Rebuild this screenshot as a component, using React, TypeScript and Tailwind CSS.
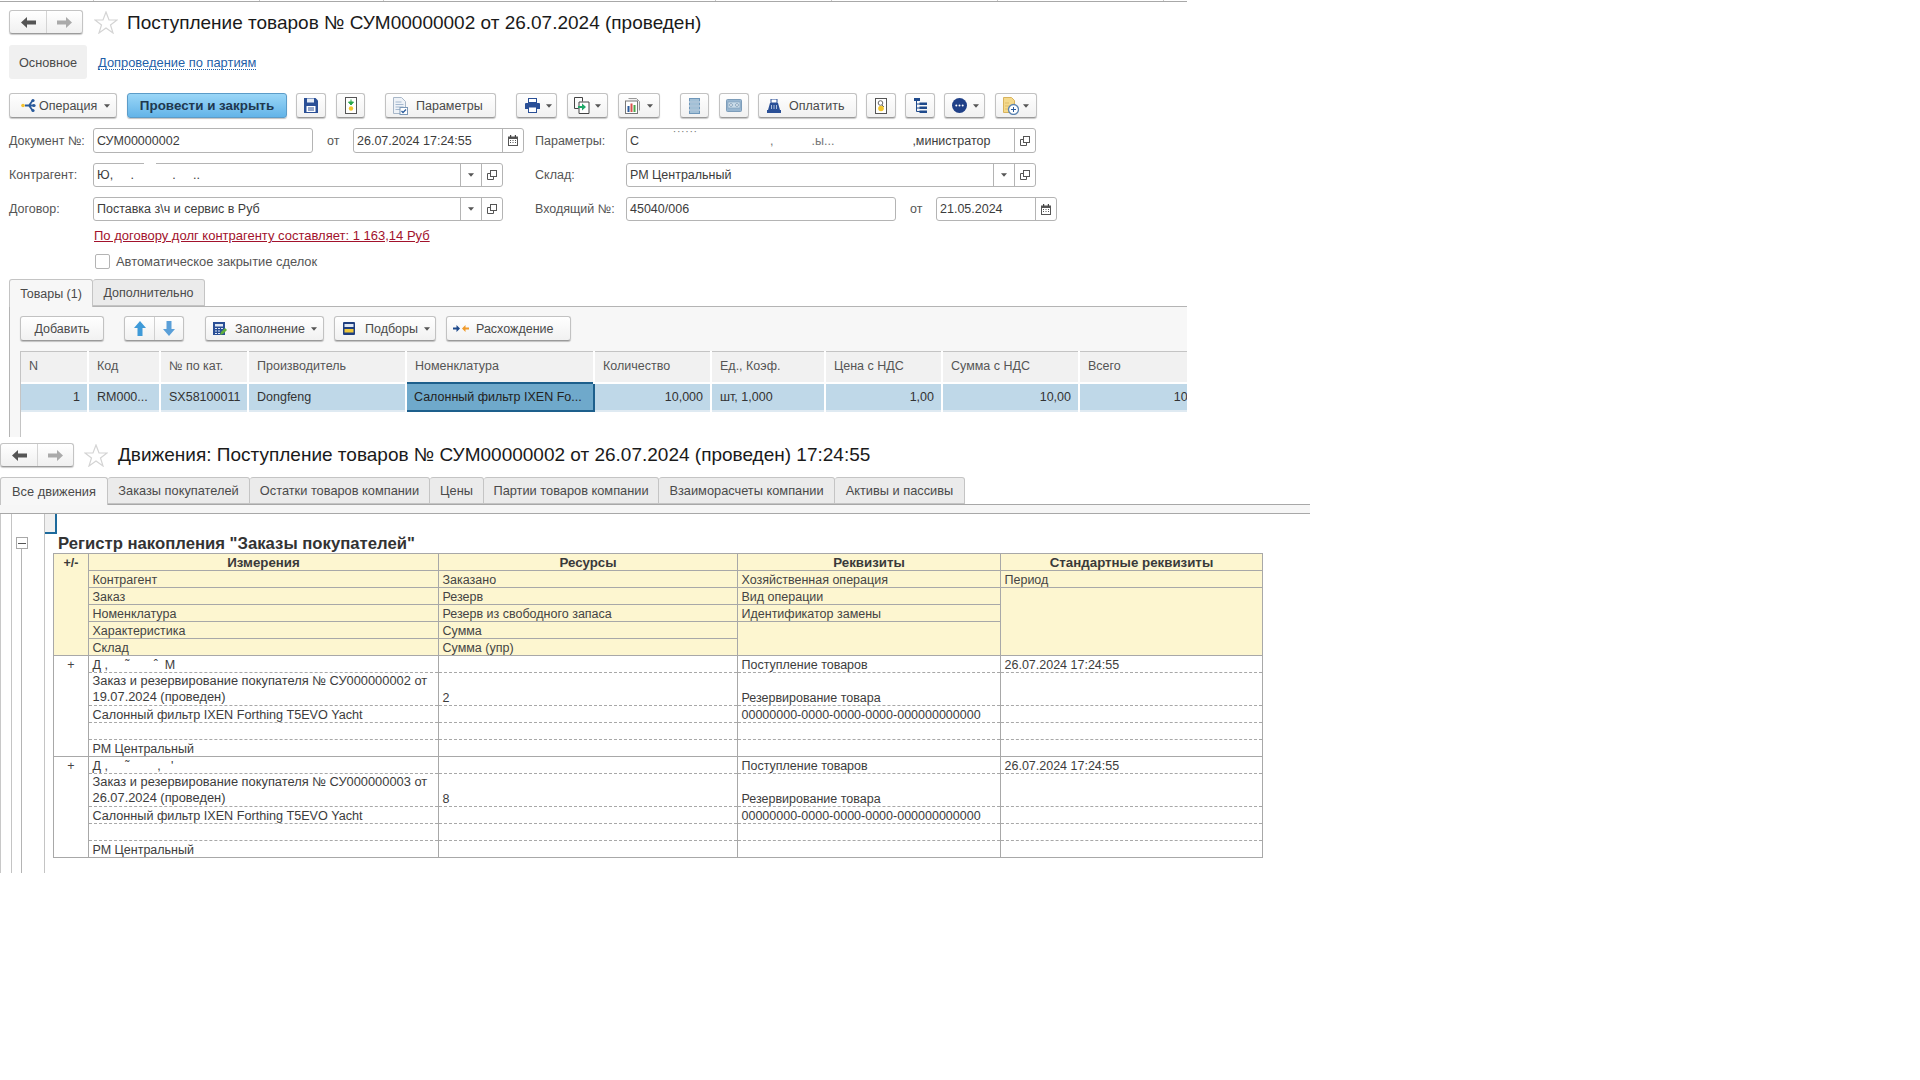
import React from 'react';

const Caret = ({ className = '' }: { className?: string }) => (
  <svg width="6" height="4" viewBox="0 0 7 4" className={className}>
    <path d="M0 0h7L3.5 4z" fill="#555" />
  </svg>
);

const Star = ({ className = '' }: { className?: string }) => (
  <svg width="24" height="23" viewBox="0 0 24 23" className={className}>
    <path d="M12 1l3 8h8l-6.500 5 2.500 8-7-5-7 5 2.500-8L1 9h8z" fill="#fff" stroke="#d4d4d4" strokeWidth="1.200" />
  </svg>
);

const NavButtons = ({ className = '' }: { className?: string }) => (
  <div className={`flex h-[24px] w-[74px] rounded-[3px] border border-[#c4c4c4] border-b-[#9c9c9c] bg-linear-to-b from-white to-[#f0f0f0] shadow-[0_1px_1px_rgba(0,0,0,0.2)] ${className}`}>
    <div className="flex w-[37px] items-center justify-center border-r border-[#d4d4d4]">
      <svg width="15" height="11" viewBox="0 0 15 11"><path d="M0 5.500L6 0v3.500h9v4H6V11z" fill="#555" /></svg>
    </div>
    <div className="flex flex-1 items-center justify-center">
      <svg width="15" height="11" viewBox="0 0 15 11"><path d="M15 5.500L9 0v3.500H0v4h9V11z" fill="#aaa" /></svg>
    </div>
  </div>
);

const btn = 'flex h-[25px] shrink-0 items-center rounded-[3px] border border-[#c2c2c2] border-b-[#9a9a9a] bg-linear-to-b from-white to-[#f1f1f1] text-[#4a4a4a] shadow-[0_1px_1px_rgba(0,0,0,0.22)]';

const OperationIcon = () => (
  <svg width="15" height="15" viewBox="0 0 15 15">
    <circle cx="2" cy="7.500" r="1.800" fill="#f2c230" />
    <path d="M4 7.500h4M8 7.500L12 2M8 7.500h5M8 7.500L12 13" stroke="#2a5b9c" strokeWidth="1.800" fill="none" />
    <circle cx="12" cy="2.500" r="1.600" fill="#2a5b9c" />
    <circle cx="13" cy="7.500" r="1.600" fill="#2a5b9c" />
    <circle cx="12" cy="12.500" r="1.600" fill="#2a5b9c" />
  </svg>
);
const SaveIcon = () => (
  <svg width="14" height="15" viewBox="0 0 14 15">
    <path d="M0 0h11.500L14 2.500V15H0z" fill="#2a4f96" />
    <rect x="3" y="0.500" width="7" height="4" fill="#e4ebf5" />
    <rect x="2.500" y="8" width="9" height="6" fill="#fff" />
    <path d="M4 10h6M4 12h6" stroke="#2a4f96" />
  </svg>
);
const MoveIcon = () => (
  <svg width="12" height="17" viewBox="0 0 12 17">
    <rect x="0.500" y="0.500" width="11" height="16" fill="#fff" stroke="#555" />
    <path d="M6 2.500v3M3.500 5h5L6 8z" fill="#2aa84a" stroke="#2aa84a" />
    <circle cx="6" cy="11.500" r="2.200" fill="#f3c62c" />
  </svg>
);
const ParamsIcon = () => (
  <svg width="15" height="18" viewBox="0 0 15 18">
    <path d="M0.500 0.500h8l4 4v12H0.500z" fill="#eef2f7" stroke="#a8b7c8" />
    <path d="M2.500 5h6M2.500 7.500h8M2.500 10h8M2.500 12.500h5" stroke="#a4b8cf" />
    <rect x="7" y="10.500" width="7.500" height="7" fill="#fff" stroke="#7d99b8" />
    <path d="M8.500 14l1.500 1.500 3-3" stroke="#2a5b9c" strokeWidth="1.300" fill="none" />
  </svg>
);
const PrintIcon = () => (
  <svg width="15" height="15" viewBox="0 0 15 15">
    <rect x="3.500" y="0.500" width="8" height="4" fill="#fff" stroke="#2a4f96" />
    <path d="M1 5h13a1 1 0 0 1 1 1v5H0V6a1 1 0 0 1 1-1z" fill="#2a4f96" />
    <rect x="3.500" y="9" width="8" height="5.500" fill="#fff" stroke="#2a4f96" />
  </svg>
);
const CopyIcon = () => (
  <svg width="16" height="17" viewBox="0 0 16 17">
    <path d="M0.500 0.500h8v4M0.500 0.500v11h4" stroke="#444" fill="none" />
    <path d="M5 5h10v11.500H5z" fill="#fff" stroke="#444" />
    <path d="M4 9h4V6.500l4 3.500-4 3.500V11H4z" fill="#1fa868" />
  </svg>
);
const ReportIcon = () => (
  <svg width="17" height="16" viewBox="0 0 17 16">
    <path d="M3.500 0.500h8l3 3v9" stroke="#999" fill="#f2f2f2" />
    <rect x="0.500" y="3" width="12" height="12.500" fill="#fff" stroke="#777" />
    <rect x="2.500" y="8" width="2" height="6" fill="#2a5b9c" />
    <rect x="5.500" y="5.500" width="2" height="8.500" fill="#d9534f" />
    <rect x="8.500" y="7" width="2" height="7" fill="#4aa84a" />
  </svg>
);
const ListIcon = () => (
  <svg width="11" height="16" viewBox="0 0 11 16">
    <rect width="11" height="16" fill="#6f97ba" />
    <path d="M0 4h11M0 8h11M0 12h11" stroke="#e8f0f6" />
    <rect x="1" y="1" width="9" height="2" fill="#a3c0d6" />
    <rect x="1" y="5" width="9" height="2" fill="#a3c0d6" />
    <rect x="1" y="9" width="9" height="2" fill="#a3c0d6" />
    <rect x="1" y="13" width="9" height="2" fill="#a3c0d6" />
  </svg>
);
const CassetteIcon = () => (
  <svg width="16" height="13" viewBox="0 0 16 13">
    <rect x="0.500" y="0.500" width="15" height="12" rx="1" fill="#98b6d0" stroke="#7d9dba" />
    <rect x="2" y="3" width="12" height="6" fill="#c9dbe9" stroke="#7d9dba" strokeWidth="0.600" />
    <circle cx="5" cy="6" r="1.400" fill="#fff" stroke="#5f83a3" strokeWidth="0.700" />
    <circle cx="11" cy="6" r="1.400" fill="#fff" stroke="#5f83a3" strokeWidth="0.700" />
  </svg>
);
const PayIcon = () => (
  <svg width="14" height="14" viewBox="0 0 14 14">
    <rect x="4" y="0" width="6" height="4" fill="#fff" stroke="#2a4f96" />
    <path d="M3 4h8l2 7H1z" fill="#2a4f96" />
    <path d="M4.500 6v4M7 6v4M9.500 6v4" stroke="#cfdcec" strokeWidth="0.800" />
    <rect x="0" y="11" width="14" height="3" fill="#2a4f96" />
  </svg>
);
const PersonIcon = () => (
  <svg width="12" height="16" viewBox="0 0 12 16">
    <rect x="0.500" y="0.500" width="11" height="15" fill="#fff" stroke="#555" />
    <circle cx="5.500" cy="5" r="2.300" fill="#fff" stroke="#666" />
    <path d="M7 7l2 2" stroke="#666" />
    <circle cx="6" cy="10.500" r="2.800" fill="#f3c62c" />
  </svg>
);
const TreeIcon = () => (
  <svg width="13" height="15" viewBox="0 0 13 15">
    <rect x="0" y="0" width="6" height="3" fill="#1f4a8c" />
    <path d="M2.500 3v10.500H6M2.500 6H6M2.500 10H6" stroke="#1f4a8c" fill="none" />
    <rect x="5.500" y="4.500" width="7.500" height="2.500" fill="#1f4a8c" />
    <rect x="5.500" y="8.500" width="7.500" height="2.500" fill="#1f4a8c" />
    <rect x="5.500" y="12.500" width="7.500" height="2.500" fill="#1f4a8c" />
  </svg>
);
const DotsIcon = () => (
  <svg width="15" height="15" viewBox="0 0 15 15">
    <circle cx="7.500" cy="7.500" r="7.500" fill="#1f4088" />
    <circle cx="4.300" cy="7.500" r="1" fill="#fff" />
    <circle cx="7.500" cy="7.500" r="1" fill="#fff" />
    <circle cx="10.700" cy="7.500" r="1" fill="#fff" />
  </svg>
);
const DocClockIcon = () => (
  <svg width="16" height="18" viewBox="0 0 16 18">
    <path d="M0.500 0.500h8l3 3v12H0.500z" fill="#f4d98c" stroke="#d8b35c" />
    <path d="M2.500 6h3M2.500 9h3M2.500 12h3" stroke="#c9a24a" strokeDasharray="1 1" />
    <circle cx="10.500" cy="12.500" r="5" fill="#fff" stroke="#5b83b0" strokeWidth="1.300" />
    <path d="M10.500 10v5M8 12.500h5" stroke="#2a5b9c" />
  </svg>
);
const ArrowUp = () => (
  <svg width="12" height="15" viewBox="0 0 12 15"><path d="M6 0l6 7H8.500v8h-5V7H0z" fill="#3f9ad8" /></svg>
);
const ArrowDown = () => (
  <svg width="12" height="15" viewBox="0 0 12 15"><path d="M6 15L0 8h3.500V0h5v8H12z" fill="#5a9fd8" /></svg>
);
const FillIcon = () => (
  <svg width="14" height="14" viewBox="0 0 14 14">
    <rect width="12" height="13" fill="#2a4f96" />
    <rect x="2" y="2" width="8" height="2.500" fill="#dfe8f3" />
    <path d="M2 6.500h2M5 6.500h2M8 6.500h2M2 9h2M5 9h2M2 11.500h2M5 11.500h2" stroke="#dfe8f3" />
    <path d="M7 13l1-3 4-4 2 2-4 4z" fill="#5fae3c" />
  </svg>
);
const PickIcon = () => (
  <svg width="12" height="13" viewBox="0 0 12 13">
    <rect width="12" height="13" rx="1" fill="#1f3f80" />
    <rect x="1.500" y="2" width="9" height="3" fill="#dfe8f3" />
    <rect x="1.500" y="7" width="9" height="3.500" fill="#f0c93c" />
  </svg>
);
const DiffIcon = () => (
  <svg width="16" height="7" viewBox="0 0 16 7">
    <path d="M0 2.500h3.500V0L7 3.500 3.500 7V4.500H0z" fill="#1f4a8c" />
    <path d="M16 2.500h-3.500V0L9 3.500 12.500 7V4.500H16z" fill="#f09a2a" />
  </svg>
);
const CalendarIcon = () => (
  <svg width="10" height="11" viewBox="0 0 10 11">
    <path d="M0 1.500h10V11H0z" fill="#555" />
    <rect x="2" y="0" width="1.200" height="2.500" fill="#444" />
    <rect x="6.800" y="0" width="1.200" height="2.500" fill="#444" />
    <rect x="1" y="4" width="8" height="6" fill="#fff" />
    <path d="M2 5.500h1M4.500 5.500h1M7 5.500h1M2 7.500h1M4.500 7.500h1M7 7.500h1" stroke="#555" />
  </svg>
);
const OpenIcon = () => (
  <svg width="10" height="10" viewBox="0 0 10 10">
    <rect x="3.500" y="0.500" width="6" height="6" fill="#fff" stroke="#555" />
    <path d="M3 3.500H0.500v6h6V7" stroke="#555" fill="none" />
  </svg>
);

type Side = 'caret' | 'open' | 'calendar';

const Field = ({ className, text, sides = [], textClass = '', children }: {
  className: string; text?: string; sides?: Side[]; textClass?: string; children?: React.ReactNode;
}) => (
  <div className={`relative flex h-full shrink-0 rounded-[3px] border border-[#b4b4b4] bg-white ${className}`}>
    <div className={`flex min-w-0 flex-1 items-center whitespace-pre pl-[3px] text-[#3c3c3c] ${textClass}`}>{text}{children}</div>
    {sides.map((s, i) => (
      <div key={i} className="flex w-[21px] shrink-0 items-center justify-center border-l border-[#b4b4b4]">
        {s === 'caret' && <Caret />}
        {s === 'open' && <OpenIcon />}
        {s === 'calendar' && <CalendarIcon />}
      </div>
    ))}
  </div>
);

const Label = ({ className, children }: { className: string; children: React.ReactNode }) => (
  <div className={`flex shrink-0 items-center text-[#555] ${className}`}>{children}</div>
);

const goodsCols = [
  { title: 'N', w: 'w-[67px]' },
  { title: 'Код', w: 'w-[72px]' },
  { title: '№ по кат.', w: 'w-[88px]' },
  { title: 'Производитель', w: 'w-[158px]' },
  { title: 'Номенклатура', w: 'w-[188px]' },
  { title: 'Количество', w: 'w-[117px]' },
  { title: 'Ед., Коэф.', w: 'w-[114px]' },
  { title: 'Цена с НДС', w: 'w-[117px]' },
  { title: 'Сумма с НДС', w: 'w-[137px]' },
  { title: 'Всего', w: 'w-[134px]' },
];

const moveTabs = [
  { title: 'Заказы покупателей', w: 'w-[142px]' },
  { title: 'Остатки товаров компании', w: 'w-[180px]' },
  { title: 'Цены', w: 'w-[54px]' },
  { title: 'Партии товаров компании', w: 'w-[175px]' },
  { title: 'Взаиморасчеты компании', w: 'w-[176px]' },
  { title: 'Активы и пассивы', w: 'w-[130px]' },
];

const rulerTicks = ['w-[94px]', 'w-[166px]', 'w-[124px]', 'w-[332px]', 'w-[116px]', 'w-[166px]', 'w-[166px]'];

const hCell = 'border border-[#a8a8a8] bg-[#fdf6d0] pl-[3.500px] pr-[2px] pt-[2px] pb-0 text-left font-normal leading-[14px] text-[#444] h-[17px]';
const hTitle = 'border border-[#a8a8a8] bg-[#fdf6d0] pt-[2px] pb-0 text-center text-[13.300px] font-bold leading-[14px] text-[#3a3a3a] h-[17px]';
const dCell = 'border-x border-y border-[#a8a8a8] [border-bottom-style:dashed] [border-top-style:dashed] pl-[3.500px] pr-[2px] pt-[2px] pb-0 align-bottom leading-[14px] text-[#3c3c3c] h-[17px]';
const lCell = 'border-x border-t border-b border-[#a8a8a8] [border-top-style:dashed] pl-[3.500px] pr-[2px] pt-[2px] pb-0 align-bottom leading-[14px] text-[#3c3c3c] h-[17px]';
const oCell = 'border-x border-y border-[#a8a8a8] [border-bottom-style:dashed] [border-top-style:dashed] pl-[3.500px] pr-[2px] py-0 align-bottom text-[12.850px] leading-[16px] text-[#3c3c3c] h-[33px]';

const MoveGroup = ({ name, order, qty }: { name: React.ReactNode; order: string; qty: string }) => (
  <>
    <tr>
      <td rowSpan={5} className="border border-[#a8a8a8] pt-px text-center align-top text-[#444]">+</td>
      <td className={`${dCell} [border-top-style:solid]`}>{name}</td>
      <td className={`${dCell} [border-top-style:solid]`}></td>
      <td className={`${dCell} [border-top-style:solid]`}>Поступление товаров</td>
      <td className={`${dCell} [border-top-style:solid]`}>26.07.2024 17:24:55</td>
    </tr>
    <tr>
      <td className={oCell}>{order}</td>
      <td className={dCell}>{qty}</td>
      <td className={dCell}>Резервирование товара</td>
      <td className={dCell}></td>
    </tr>
    <tr>
      <td className={`${dCell} text-[12.650px]`}>Салонный фильтр IXEN Forthing T5EVO Yacht</td>
      <td className={dCell}></td>
      <td className={dCell}>00000000-0000-0000-0000-000000000000</td>
      <td className={dCell}></td>
    </tr>
    <tr>
      <td className={dCell}></td>
      <td className={dCell}></td>
      <td className={dCell}></td>
      <td className={dCell}></td>
    </tr>
    <tr>
      <td className={lCell}>РМ Центральный</td>
      <td className={lCell}></td>
      <td className={lCell}></td>
      <td className={lCell}></td>
    </tr>
  </>
);

export default function App() {
  return (
    <div className="h-[1080px] w-[1920px] overflow-hidden bg-white font-['Liberation_Sans',Arial,sans-serif] text-[12.500px] leading-[16px]">
      {/* окно документа */}
      <div className="h-[437px] w-[1187px] overflow-hidden">
        <div className="flex h-[2px] border-b border-[#a8a8a8]">
          {rulerTicks.map((w, i) => <div key={i} className={`${w} border-r border-[#c8c8c8]`} />)}
        </div>

        <div className="ml-[9px] mt-[8px] flex h-[24px] items-center">
          <NavButtons />
          <Star className="ml-[11px]" />
          <div className="ml-[9px] pt-px text-[19px] leading-[24px] text-[#1a1a1a]">Поступление товаров № СУМ00000002 от 26.07.2024 (проведен)</div>
        </div>

        <div className="ml-[9px] mt-[11px] flex h-[34px] items-center">
          <div className="flex h-full w-[78px] items-center justify-center rounded-[3px] bg-[#f0f0f0] pt-px text-[12.700px] text-[#4a4a4a]">Основное</div>
          <div className="ml-[11px] mt-[2px] border-b border-dotted border-[#1f5fa8] text-[12.900px] leading-[13px] text-[#1f5fa8]">Допроведение по партиям</div>
        </div>

        <div className="ml-[9px] mt-[14px] flex h-[25px]">
          <div className={`${btn} w-[108px] pl-[11px]`}><OperationIcon /><span className="ml-[3px]">Операция</span><Caret className="ml-[7px]" /></div>
          <div className="ml-[10px] flex h-[25px] w-[160px] items-center justify-center rounded-[3px] border border-[#5c9cc8] bg-linear-to-b from-[#9ad6f7] to-[#62b4e8] text-[13.400px] font-bold text-[#20384f] shadow-[0_1px_1px_rgba(0,0,0,0.25)]">Провести и закрыть</div>
          <div className={`${btn} ml-[9px] w-[30px] justify-center`}><SaveIcon /></div>
          <div className={`${btn} ml-[10px] w-[29px] justify-center`}><MoveIcon /></div>
          <div className={`${btn} ml-[20px] w-[111px] pl-[7px]`}><ParamsIcon /><span className="ml-[8px]">Параметры</span></div>
          <div className={`${btn} ml-[20px] w-[41px] pl-[8px]`}><PrintIcon /><Caret className="ml-[6px]" /></div>
          <div className={`${btn} ml-[10px] w-[41px] pl-[6px]`}><CopyIcon /><Caret className="ml-[5px]" /></div>
          <div className={`${btn} ml-[10px] w-[42px] pl-[6px]`}><ReportIcon /><Caret className="ml-[5px]" /></div>
          <div className={`${btn} ml-[20px] w-[29px] justify-center`}><ListIcon /></div>
          <div className={`${btn} ml-[10px] w-[30px] justify-center`}><CassetteIcon /></div>
          <div className={`${btn} ml-[9px] w-[99px] pl-[8px]`}><PayIcon /><span className="ml-[8px]">Оплатить</span></div>
          <div className={`${btn} ml-[9px] w-[30px] justify-center`}><PersonIcon /></div>
          <div className={`${btn} ml-[9px] w-[30px] justify-center`}><TreeIcon /></div>
          <div className={`${btn} ml-[9px] w-[41px] pl-[7px]`}><DotsIcon /><Caret className="ml-[6px]" /></div>
          <div className={`${btn} ml-[10px] w-[42px] pl-[7px]`}><DocClockIcon /><Caret className="ml-[4px]" /></div>
        </div>

        <div className="ml-[9px] mt-[10px] flex h-[25px]">
          <Label className="w-[84px]">Документ №:</Label>
          <Field className="w-[220px]" text="СУМ00000002" />
          <Label className="ml-[14px] w-[26px]">от</Label>
          <Field className="w-[171px]" text="26.07.2024 17:24:55" sides={['calendar']} />
          <Label className="ml-[11px] w-[91px]">Параметры:</Label>
          <Field className="w-[410px]" sides={['open']}>
            <span>С</span>
            <span className="ml-[34px] -translate-y-[5px] text-[#777]">˙˙˙˙˙˙</span>
            <span className="ml-[72px] text-[#777]">,</span>
            <span className="ml-[38px] text-[#777]">.ы...</span>
            <span className="ml-[78px]">,министратор</span>
          </Field>
        </div>
        <div className="ml-[9px] mt-[10px] flex h-[24px]">
          <Label className="w-[84px]">Контрагент:</Label>
          <Field className="w-[410px]" text="Ю,     .           .     .." sides={['caret', 'open']}>
            <div className="absolute -top-px left-[50px] h-[3px] w-[12px] bg-white" />
          </Field>
          <Label className="ml-[32px] w-[91px]">Склад:</Label>
          <Field className="w-[410px]" text="РМ Центральный" sides={['caret', 'open']} />
        </div>
        <div className="ml-[9px] mt-[10px] flex h-[24px]">
          <Label className="w-[84px]">Договор:</Label>
          <Field className="w-[410px]" text="Поставка з\ч и сервис в Руб" sides={['caret', 'open']} />
          <Label className="ml-[32px] w-[91px]">Входящий №:</Label>
          <Field className="w-[270px]" text="45040/006" />
          <Label className="ml-[14px] w-[26px]">от</Label>
          <Field className="w-[121px]" text="21.05.2024" sides={['calendar']} />
        </div>

        <div className="ml-[94px] mt-[7px] h-[16px] text-[13px] underline text-[#a2122c]">По договору долг контрагенту составляет: 1 163,14 Руб</div>

        <div className="ml-[95px] mt-[10px] flex h-[15px] items-center">
          <div className="h-[15px] w-[15px] rounded-[2px] border border-[#b4b4b4] bg-white" />
          <span className="ml-[6px] text-[12.900px] text-[#555]">Автоматическое закрытие сделок</span>
        </div>

        <div className="ml-[9px] mt-[10px] flex h-[27px]">
          <div className="z-10 -mb-px flex w-[84px] items-center justify-center rounded-t-[3px] border border-b-0 border-[#c4c4c4] bg-[#f7f7f7] text-[#4a4a4a]">Товары (1)</div>
          <div className="flex w-[112px] items-center justify-center rounded-t-[3px] border border-l-0 border-[#c4c4c4] bg-[#ebebeb] text-[#4a4a4a]">Дополнительно</div>
        </div>

        <div className="ml-[9px] h-[131px] overflow-hidden border-l border-t border-[#b4b4b4] bg-[#f7f7f7] pl-[10px]">
          <div className="mt-[9px] flex h-[25px]">
            <div className={`${btn} w-[84px] justify-center`}>Добавить</div>
            <div className={`${btn} ml-[20px] w-[60px]`}>
              <div className="flex h-full w-[30px] items-center justify-center border-r border-[#d0d0d0]"><ArrowUp /></div>
              <div className="flex h-full flex-1 items-center justify-center"><ArrowDown /></div>
            </div>
            <div className={`${btn} ml-[21px] w-[119px] pl-[7px]`}><FillIcon /><span className="ml-[8px]">Заполнение</span><Caret className="ml-[6px]" /></div>
            <div className={`${btn} ml-[10px] w-[102px] pl-[8px]`}><PickIcon /><span className="ml-[10px]">Подборы</span><Caret className="ml-[6px]" /></div>
            <div className={`${btn} ml-[10px] w-[125px] pl-[6px]`}><DiffIcon /><span className="ml-[7px]">Расхождение</span></div>
          </div>
          <div className="mt-[10px] h-[88px] w-[1300px] border-l border-[#c4c4c4] bg-white">
            <table className="table-fixed border-collapse">
              <thead>
                <tr className="border-t border-[#c4c4c4]">
                  {goodsCols.map((c) => (
                    <th key={c.title} className={`${c.w} h-[31px] border-r-2 border-white bg-[#f1f1f1] pb-[2px] pl-[8px] text-left font-normal text-[#555]`}>{c.title}</th>
                  ))}
                </tr>
              </thead>
              <tbody>
                <tr className="border-t-2 border-b-2 border-t-white border-b-[#dfeaf2]">
                  <td className="h-[28px] border-r-2 border-white bg-[#bfd8e8] pr-[7px] text-right text-[#333]">1</td>
                  <td className="border-r-2 border-white bg-[#bfd8e8] pl-[8px] text-[#333]">RM000...</td>
                  <td className="border-r-2 border-white bg-[#bfd8e8] pl-[8px] text-[#333]">SX58100011</td>
                  <td className="border-r-2 border-white bg-[#bfd8e8] pl-[8px] text-[#333]">Dongfeng</td>
                  <td className="border-2 border-[#1d5f8c] bg-[#6fa9cb] pl-[7px] text-[#222]">Салонный фильтр IXEN Fo...</td>
                  <td className="border-r-2 border-white bg-[#bfd8e8] pr-[7px] text-right text-[#333]">10,000</td>
                  <td className="border-r-2 border-white bg-[#bfd8e8] pl-[8px] text-[#333]">шт, 1,000</td>
                  <td className="border-r-2 border-white bg-[#bfd8e8] pr-[7px] text-right text-[#333]">1,00</td>
                  <td className="border-r-2 border-white bg-[#bfd8e8] pr-[7px] text-right text-[#333]">10,00</td>
                  <td className="border-r-2 border-white bg-[#bfd8e8] pr-[7px] text-right text-[#333]">10,00</td>
                </tr>
              </tbody>
            </table>
          </div>
        </div>
      </div>

      {/* окно движений */}
      <div className="mt-[6px] flex h-[24px] items-center">
        <NavButtons />
        <Star className="ml-[10px]" />
        <div className="ml-[10px] text-[19px] leading-[24px] text-[#1a1a1a]">Движения: Поступление товаров № СУМ00000002 от 26.07.2024 (проведен) 17:24:55</div>
      </div>

      <div className="mt-[10px] flex h-[27px] text-[12.800px]">
        <div className="z-10 -mb-px flex w-[108px] items-center justify-center rounded-t-[3px] border border-b-0 border-[#c4c4c4] bg-[#f7f7f7] text-[#4a4a4a]">Все движения</div>
        {moveTabs.map((t) => (
          <div key={t.title} className={`${t.w} flex items-center justify-center rounded-t-[3px] border border-l-0 border-[#c4c4c4] bg-[#ebebeb] text-[#4a4a4a]`}>{t.title}</div>
        ))}
      </div>
      <div className="h-[10px] w-[1310px] border-y border-[#a8a8a8] bg-[#f6f6f6]" />

      <div className="flex h-[359px] border-l border-[#c8c8c8]">
        <div className="w-[10px] shrink-0" />
        <div className="flex w-[33px] shrink-0 flex-col items-start border-l border-[#c4c4c4]">
          <div className="ml-[4px] mt-[23px] flex h-[12px] w-[12px] items-center justify-center border border-[#a8a8a8]">
            <div className="h-px w-[8px] bg-[#555]" />
          </div>
          <div className="ml-[9px] w-px flex-1 bg-[#b4b4b4]" />
        </div>
        <div className="border-l border-[#c4c4c4]">
          <div className="h-[20px] w-[12px] border-b-2 border-r-2 border-[#1d6a9c] bg-[#f0f0f0]" />
          <div className="ml-[13px] h-[19px] whitespace-nowrap text-[16.700px] font-bold leading-[19px] text-[#333]">Регистр накопления "Заказы покупателей"</div>
          <table className="ml-[8px] w-[1209px] table-fixed border-collapse">
            <colgroup>
              <col className="w-[35px]" />
              <col className="w-[350px]" />
              <col className="w-[299px]" />
              <col className="w-[263px]" />
              <col className="w-[262px]" />
            </colgroup>
            <thead>
              <tr>
                <th rowSpan={6} className="border border-[#a8a8a8] bg-[#fdf6d0] pt-px align-top font-bold text-[#3a3a3a]">+/-</th>
                <th className={hTitle}>Измерения</th>
                <th className={hTitle}>Ресурсы</th>
                <th className={hTitle}>Реквизиты</th>
                <th className={hTitle}>Стандартные реквизиты</th>
              </tr>
              <tr>
                <th className={hCell}>Контрагент</th>
                <th className={hCell}>Заказано</th>
                <th className={hCell}>Хозяйственная операция</th>
                <th className={hCell}>Период</th>
              </tr>
              <tr>
                <th className={hCell}>Заказ</th>
                <th className={hCell}>Резерв</th>
                <th className={hCell}>Вид операции</th>
                <th rowSpan={4} className={hCell}></th>
              </tr>
              <tr>
                <th className={hCell}>Номенклатура</th>
                <th className={hCell}>Резерв из свободного запаса</th>
                <th className={hCell}>Идентификатор замены</th>
              </tr>
              <tr>
                <th className={hCell}>Характеристика</th>
                <th className={hCell}>Сумма</th>
                <th rowSpan={2} className={hCell}></th>
              </tr>
              <tr>
                <th className={hCell}>Склад</th>
                <th className={hCell}>Сумма (упр)</th>
              </tr>
            </thead>
            <tbody>
              <MoveGroup name={<span className="whitespace-pre">Д ,     ˜       ˆ  М</span>} order="Заказ и резервирование покупателя № СУ000000002 от 19.07.2024 (проведен)" qty="2" />
              <MoveGroup name={<span className="whitespace-pre">Д ,     ˜        ,   '</span>} order="Заказ и резервирование покупателя № СУ000000003 от 26.07.2024 (проведен)" qty="8" />
            </tbody>
          </table>
        </div>
      </div>
    </div>
  );
}
